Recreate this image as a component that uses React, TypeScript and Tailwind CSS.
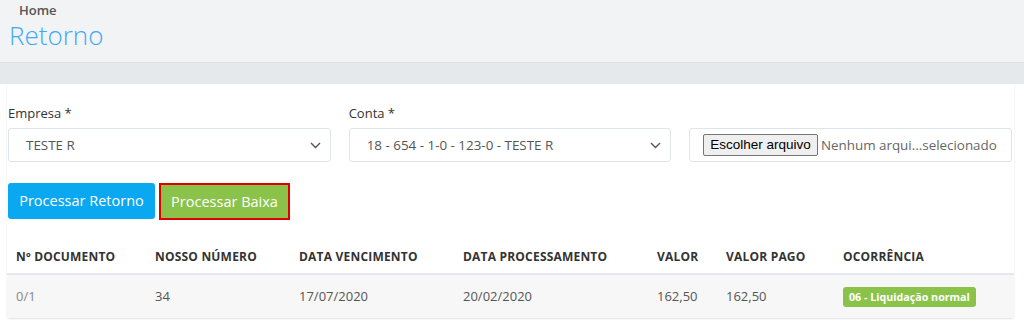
import React from 'react';

const font = { fontFamily: '"Open Sans", "Liberation Sans", sans-serif' };

function Chevron() {
  return (
    <svg width="11" height="7" viewBox="0 0 11 7" className="shrink-0">
      <path d="M1 1l4.5 4.5L10 1" fill="none" stroke="#555" strokeWidth="1.4" />
    </svg>
  );
}

function SelectBox({ value }: { value: string }) {
  return (
    <div className="h-[34px] border border-[#dfe4ea] rounded-[3px] bg-white flex items-center justify-between pl-[17px] pr-[9px] text-[13.4px] text-[#555]">
      <span>{value}</span>
      <Chevron />
    </div>
  );
}

const cols = [
  { label: 'Nº DOCUMENTO', w: 'w-[139px]' },
  { label: 'NOSSO NÚMERO', w: 'w-[144px]' },
  { label: 'DATA VENCIMENTO', w: 'w-[164px]' },
  { label: 'DATA PROCESSAMENTO', w: 'w-[194px]' },
  { label: 'VALOR', w: 'w-[69px]' },
  { label: 'VALOR PAGO', w: 'w-[117px]' },
  { label: 'OCORRÊNCIA', w: '' },
];

export default function App() {
  return (
    <div className="w-[1024px] h-[330px] bg-white overflow-hidden" style={font}>
      <div className="h-[62px] bg-[#f2f3f5] pt-[2px]">
        <div className="pl-[19px] text-[13px] font-semibold text-[#555] leading-[16px]">Home</div>
        <div className="pl-[9px] text-[26px] font-light text-[#3fa9f5] leading-[28px] mt-[3px]">Retorno</div>
      </div>
      <div className="h-[22px] bg-[#e6e9ec] border-t border-[#dde1e5]" />
      <div className="pl-[7px] pr-[10px]">
        <div className="bg-white shadow-[0_1px_2px_rgba(0,0,0,0.12)] rounded-b-[3px]">
          <div className="grid grid-cols-3 gap-[18px] pl-[1px] pr-[2px] pt-[20px]">
            <div>
              <div className="text-[13px] text-[#333] leading-[18px] mb-[6px]">Empresa *</div>
              <SelectBox value="TESTE R" />
            </div>
            <div>
              <div className="text-[13px] text-[#333] leading-[18px] mb-[6px]">Conta *</div>
              <SelectBox value="18 - 654 - 1-0 - 123-0 - TESTE R" />
            </div>
            <div className="pt-[24px]">
              <div className="h-[34px] border border-[#dfe4ea] rounded-[3px] bg-white flex items-center pl-[13px] text-[13px]">
                <span
                  className="h-[22px] px-[6px] flex items-center border border-[#767676] bg-[#efefef] rounded-[2px] text-black text-[13.5px]"
                  style={{ fontFamily: '"Liberation Sans", Arial, sans-serif' }}
                >
                  Escolher arquivo
                </span>
                <span className="ml-[3px] text-[#666] text-[13.4px]">Nenhum arqui...selecionado</span>
              </div>
            </div>
          </div>
          <div className="flex gap-[4px] pl-[1px] mt-[21px]">
            <button className="h-[36px] w-[147px] bg-[#0aa8f0] text-white text-[14.5px] rounded-[3px]">Processar Retorno</button>
            <button className="h-[37px] w-[131px] bg-[#8bc34a] text-white text-[14.5px] border-2 border-[#e00000]">Processar Baixa</button>
          </div>
          <table className="w-full mt-[19px] border-collapse text-left">
            <thead>
              <tr className="border-b-2 border-[#e4e9ef]">
                {cols.map((c) => (
                  <th key={c.label} className={`${c.w} pl-[9px] h-[35px] pt-[2px] text-[12px] font-bold text-[#333] tracking-[0.2px]`}>
                    {c.label}
                  </th>
                ))}
              </tr>
            </thead>
            <tbody>
              <tr className="bg-[#f7f7f7] h-[44px] text-[13px] text-[#555]">
                <td className="pl-[9px] text-[#888]">0/1</td>
                <td className="pl-[9px]">34</td>
                <td className="pl-[9px]">17/07/2020</td>
                <td className="pl-[9px]">20/02/2020</td>
                <td className="pl-[9px]">162,50</td>
                <td className="pl-[9px]">162,50</td>
                <td className="pl-[9px]">
                  <span className="inline-block bg-[#8bc34a] text-white text-[10.7px] font-bold px-[6px] leading-[20px] rounded-[3px]">
                    06 - Liquidação normal
                  </span>
                </td>
              </tr>
            </tbody>
          </table>
        </div>
      </div>
    </div>
  );
}
